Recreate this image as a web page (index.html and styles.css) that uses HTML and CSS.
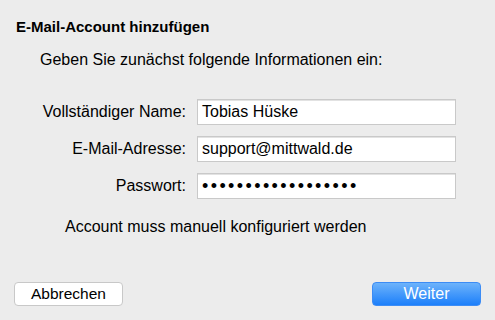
FILE: index.html
```html
<!DOCTYPE html>
<html lang="de">
<head>
    <meta charset="UTF-8">
    <meta name="viewport" content="width=device-width, initial-scale=1.0">
    <title>E-Mail-Account hinzufügen</title>
    <link rel="stylesheet" href="styles.css">
</head>
<body>
    <div class="dialog">
        <h1>E-Mail-Account hinzufügen</h1>
        <p class="intro">Geben Sie zunächst folgende Informationen ein:</p>

        <div class="form">
            <label>Vollständiger Name:</label>
            <div class="field">Tobias Hüske</div>
            <label>E-Mail-Adresse:</label>
            <div class="field">support@mittwald.de</div>
            <label>Passwort:</label>
            <div class="field password">••••••••••••••••••</div>
        </div>

        <p class="note">Account muss manuell konfiguriert werden</p>

        <div class="buttons">
            <button class="btn">Abbrechen</button>
            <button class="btn primary">Weiter</button>
        </div>
    </div>
</body>
</html>
```

FILE: styles.css
```css
body, html {
    margin: 0;
    padding: 0;
    background-color: #ececec;
    font-family: "Liberation Sans", Arial, sans-serif;
    color: #000;
}
.dialog {
    height: 320px;
    box-sizing: border-box;
    padding: 18px 16px 14px 16px;
    display: flex;
    flex-direction: column;
}
h1 {
    font-size: 15px;
    font-weight: bold;
    line-height: 18px;
    margin: 0;
}
.intro {
    font-size: 16px;
    line-height: 19px;
    margin: 14px 0 0 24px;
}
.form {
    display: grid;
    grid-template-columns: 170px 259px;
    column-gap: 11px;
    row-gap: 11px;
    align-items: center;
    margin-top: 30px;
}
label {
    font-size: 16px;
    text-align: right;
}
.field {
    height: 26px;
    box-sizing: border-box;
    background: #fff;
    border: 1px solid #c9c9c9;
    box-shadow: inset 0 1px 0 #e2e2e2;
    font-size: 16px;
    line-height: 24px;
    padding: 0 4px;
    overflow: hidden;
}
.password {
    font-size: 18px;
    letter-spacing: 2.4px;
}
.note {
    font-size: 16px;
    line-height: 19px;
    margin: 18px 0 0 49px;
}
.buttons {
    margin-top: auto;
    display: flex;
    justify-content: space-between;
}
.btn {
    width: 109px;
    height: 24px;
    border: 1px solid #c8c8c8;
    border-radius: 4px;
    background: #fff;
    font-family: "Liberation Sans", Arial, sans-serif;
    font-size: 15.5px;
    color: #000;
    padding: 0;
    margin: 0 -2px;
    cursor: pointer;
}
.primary {
    border-color: #3c8cf5;
    background: linear-gradient(#6db3fb, #1c7ffa);
    color: #fff;
    font-size: 16px;
}
```
